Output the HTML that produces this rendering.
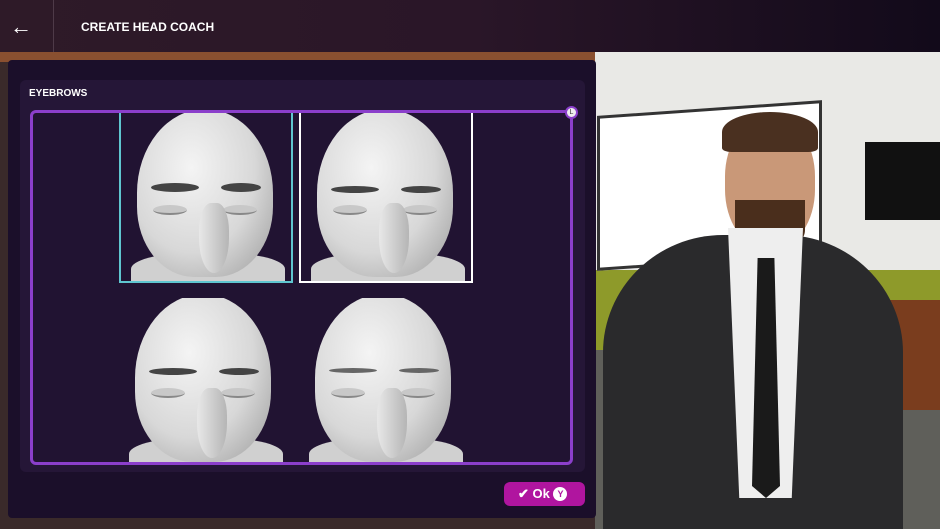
<!DOCTYPE html>
<html><head><style>
*{margin:0;padding:0;box-sizing:border-box}
body{width:940px;height:529px;overflow:hidden;position:relative;background:#3a2a2a;font-family:"Liberation Sans",sans-serif}
.a{position:absolute}
.face{position:absolute;width:174px;height:170px;overflow:hidden}
.neck{position:absolute;left:10px;top:140px;width:154px;height:40px;background:#d0d0d0;border-radius:40% 40% 0 0}
.head{position:absolute;left:16px;top:-4px;width:136px;height:168px;border-radius:50% 50% 42% 42%;background:radial-gradient(ellipse at 40% 35%,#f4f4f4,#d8d8d8 55%,#9a9a9a)}
.brow{position:absolute;height:7px;width:48px;background:#444;border-radius:50%}
.eye{position:absolute;width:34px;height:10px;border-radius:50%;background:#c8c8c8;border-bottom:2px solid #888}
.nose{position:absolute;left:78px;top:90px;width:30px;height:70px;border-radius:40% 40% 50% 50%;background:linear-gradient(90deg,#e8e8e8,#b5b5b5)}
</style></head><body>
<div class="a" style="left:595px;top:52px;width:345px;height:245px;background:#e9e9e6"></div>
<div class="a" style="left:595px;top:270px;width:345px;height:80px;background:#8e9a2a"></div>
<div class="a" style="left:595px;top:350px;width:345px;height:179px;background:#5f5f5a"></div>
<div class="a" style="left:890px;top:300px;width:50px;height:110px;background:#7a3d1e"></div>
<div class="a" style="left:597px;top:108px;width:225px;height:155px;background:#fff;border:3px solid #333;transform:skewY(-4deg)"></div>
<div class="a" style="left:865px;top:142px;width:75px;height:78px;background:#111"></div>
<div class="a" style="left:725px;top:118px;width:90px;height:130px;border-radius:45%;background:#c99878"></div>
<div class="a" style="left:722px;top:112px;width:96px;height:40px;border-radius:50% 50% 10% 10%;background:#4a3020"></div>
<div class="a" style="left:735px;top:200px;width:70px;height:50px;border-radius:0 0 40% 40%;background:#4a2e1c"></div>
<div class="a" style="left:603px;top:235px;width:300px;height:294px;border-radius:40% 40% 0 0;background:#2a2a2c"></div>
<div class="a" style="left:728px;top:228px;width:75px;height:270px;background:#eee;clip-path:polygon(0 0,100% 0,85% 100%,15% 100%)"></div>
<div class="a" style="left:752px;top:258px;width:28px;height:240px;background:#1a1a1a;clip-path:polygon(20% 0,80% 0,100% 95%,50% 100%,0 95%)"></div>
<div class="a" style="left:0;top:0;width:940px;height:52px;background:linear-gradient(90deg,#2e1a28,#2a1628 50%,#120a1a)"></div>
<div class="a" style="left:0;top:52px;width:595px;height:10px;background:#8a5030"></div>
<div class="a" style="left:53px;top:0;width:1px;height:52px;background:#4e3a48"></div>
<div class="a" style="left:10px;top:14px;color:#fff;font-size:22px">&#8592;</div>
<div class="a" style="left:81px;top:20px;color:#fff;font-size:12px;font-weight:bold">CREATE HEAD COACH</div>
<div class="a" style="left:8px;top:60px;width:588px;height:458px;background:#1b0f2a;border-radius:4px"></div>
<div class="a" style="left:20px;top:80px;width:565px;height:392px;background:#251637;border-radius:6px"></div>
<div class="a" style="left:29px;top:88px;color:#fff;font-size:10px;font-weight:bold">EYEBROWS</div>
<div class="a" style="left:30px;top:110px;width:543px;height:355px;border:3px solid #8b3fcb;border-radius:6px;background:#211332;overflow:hidden">
 <div class="face" style="left:86px;top:0px;border:2px solid #5fc6d0;border-top:none"><div class="neck"></div><div class="head"></div><div class="brow" style="left:30px;top:70px;height:9px"></div><div class="brow" style="left:100px;top:70px;height:9px;width:40px"></div><div class="eye" style="left:32px;top:92px"></div><div class="eye" style="left:102px;top:92px"></div><div class="nose"></div></div>
 <div class="face" style="left:266px;top:0px;border:2px solid #fff;border-top:none"><div class="neck"></div><div class="head"></div><div class="brow" style="left:30px;top:73px"></div><div class="brow" style="left:100px;top:73px;width:40px"></div><div class="eye" style="left:32px;top:92px"></div><div class="eye" style="left:102px;top:92px"></div><div class="nose"></div></div>
 <div class="face" style="left:86px;top:185px"><div class="neck"></div><div class="head"></div><div class="brow" style="left:30px;top:70px"></div><div class="brow" style="left:100px;top:70px;width:40px"></div><div class="eye" style="left:32px;top:90px"></div><div class="eye" style="left:102px;top:90px"></div><div class="nose"></div></div>
 <div class="face" style="left:266px;top:185px"><div class="neck"></div><div class="head"></div><div class="brow" style="left:30px;top:70px;height:5px;background:#666"></div><div class="brow" style="left:100px;top:70px;height:5px;width:40px;background:#666"></div><div class="eye" style="left:32px;top:90px"></div><div class="eye" style="left:102px;top:90px"></div><div class="nose"></div></div>
</div>
<div class="a" style="left:565px;top:106px;width:13px;height:13px;border-radius:50%;background:#eee;border:2px solid #8b3fcb;font-size:7px;text-align:center;line-height:9px;color:#333">L</div>
<div class="a" style="left:504px;top:482px;width:81px;height:24px;background:#b0159f;border-radius:6px;color:#fff;font-size:13px;font-weight:bold;line-height:24px;padding-left:14px">&#10004; Ok <span style="display:inline-block;width:14px;height:14px;border-radius:50%;background:#fff;color:#b0159f;font-size:9px;line-height:14px;text-align:center;vertical-align:1px">Y</span></div>
</body></html>
